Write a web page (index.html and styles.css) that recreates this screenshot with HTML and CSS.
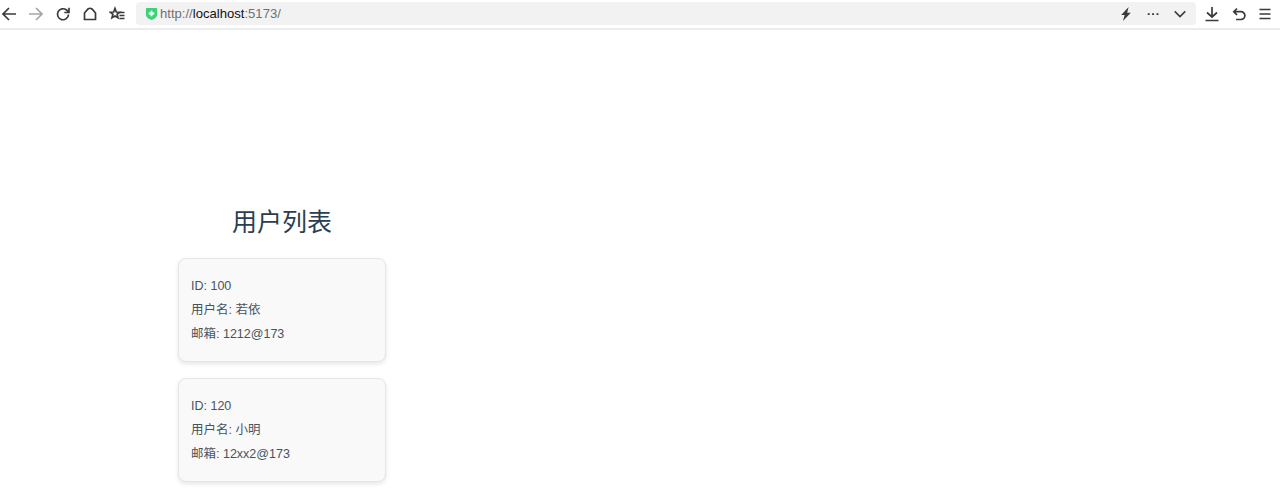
FILE: index.html
```html
<!DOCTYPE html>
<html lang="zh-CN">
  <head>
    <meta charset="UTF-8" />
    <meta name="viewport" content="width=device-width, initial-scale=1.0" />
    <title>用户列表</title>
    <link rel="stylesheet" href="styles.css">
  </head>
  <body>
    <header class="toolbar">
      <div class="nav">
        <svg class="icon" viewBox="0 0 16 16"><path d="M15 8H2M8 2 2 8l6 6"/></svg>
        <svg class="icon muted" viewBox="0 0 16 16"><path d="M1 8h13M8 2l6 6-6 6"/></svg>
        <svg class="icon" viewBox="0 0 16 16"><path d="M13.500 8.500A5.500 5.500 0 1 1 11.500 4L13.500 6M14 1.800v4.700H9.300"/></svg>
        <svg class="icon" viewBox="0 0 16 16"><path d="M2.500 13.500V7L6 3q2-1.500 4 0l3.500 4v6.500z"/></svg>
        <svg class="icon" viewBox="0 0 16 16"><path d="M6 2.500 7.300 6l3.400.2-2.600 2.200.9 3.400L6 10l-3 1.800.9-3.400L1.300 6.200 4.700 6z"/><path d="M10.500 6.500h5M10.500 9.500h5M10.500 12.500h5"/></svg>
      </div>
      <div class="address">
        <svg class="shield" viewBox="0 0 14 14"><path class="shield-bg" d="M1 1.500Q1 .5 2 .5h10q1 0 1 1v6.500q0 3-6 5.500-6-2.500-6-5.500z"/><path class="shield-plus" d="M7 3.500v6M4 6.500h6"/></svg>
        <span class="url">http://<b>localhost</b>:5173/</span>
        <div class="address-tools">
          <svg class="icon small" viewBox="0 0 16 16"><path class="solid" d="M11 0 2.500 9h4L4.500 16l9-9.500H9.300z"/></svg>
          <svg class="icon small" viewBox="0 0 16 16"><path class="solid" d="M2 7h2.200v2.200H2zM7 7h2.200v2.200H7zM12 7h2.200v2.200H12z"/></svg>
          <svg class="icon small" viewBox="0 0 16 16"><path d="M2 5l6 6 6-6"/></svg>
        </div>
      </div>
      <div class="nav end">
        <svg class="icon" viewBox="0 0 16 16"><path d="M8 1v10M3 6.500 8 11l5-4.500M1.500 14.500h13"/></svg>
        <svg class="icon" viewBox="0 0 16 16"><path d="M6 2.500 2.800 5.700 6 8.800M3 5.700h7a3.500 3.500 0 0 1 0 7.800H5"/></svg>
        <svg class="icon" viewBox="0 0 16 16"><path d="M2.500 3.500h11M2.500 8h11M2.500 12.500h11"/></svg>
      </div>
    </header>

    <main class="user-list">
      <h2 class="title">用户列表</h2>
      <div class="card">
        <p>ID: 100</p>
        <p>用户名: 若依</p>
        <p>邮箱: 1212@173</p>
      </div>
      <div class="card">
        <p>ID: 120</p>
        <p>用户名: 小明</p>
        <p>邮箱: 12xx2@173</p>
      </div>
    </main>
  </body>
</html>
```

FILE: styles.css
```css
* {
  box-sizing: border-box;
}

html,
body {
  height: 100%;
}

body {
  margin: 0;
  background: #fff;
  color: #2c3e50;
  font-family: "Liberation Sans", "Noto Sans CJK SC", sans-serif;
  overflow: hidden;
}

.toolbar {
  display: flex;
  align-items: center;
  height: 30px;
  padding: 0 7px 0 1px;
  border-bottom: 2px solid #ececec;
  background: #fff;
}

.nav {
  display: flex;
  align-items: center;
  gap: 11px;
}

.nav.end {
  gap: 10.5px;
  margin-left: 8px;
}

.icon {
  width: 16px;
  height: 16px;
  fill: none;
  stroke: #3a3a3a;
  stroke-width: 1.7;
  flex: none;
}

.icon.muted {
  stroke: #a6a6a6;
}

.icon.small {
  width: 14px;
  height: 14px;
}

.icon .solid {
  fill: #3a3a3a;
  stroke: none;
}

.address {
  flex: 1;
  display: flex;
  align-items: center;
  height: 23px;
  margin: 0 0 1px 11px;
  padding: 0 9px;
  background: #f2f2f2;
  border-radius: 4px;
}

.shield {
  width: 13px;
  height: 14px;
  margin-right: 2px;
  flex: none;
}

.shield-bg {
  fill: #3fd07a;
}

.shield-plus {
  fill: none;
  stroke: #fff;
  stroke-width: 2;
}

.url {
  font-size: 13.1px;
  color: #707070;
}

.url b {
  font-weight: normal;
  color: #111;
}

.address-tools {
  display: flex;
  align-items: center;
  gap: 13px;
  margin-left: auto;
}

.user-list {
  width: 208px;
  margin-left: 178px;
  padding-top: 174px;
}

.title {
  margin: 0 0 18px;
  font-size: 25px;
  font-weight: normal;
  line-height: 36px;
  text-align: center;
}

.card {
  height: 104px;
  margin-bottom: 16px;
  padding: 15px 12px;
  background: #f9f9f9;
  border: 1px solid #e6e6e6;
  border-radius: 8px;
  box-shadow: 0 2px 4px rgba(0, 0, 0, 0.1);
}

.card p {
  margin: 0;
  color: #46535f;
  font-size: 12.5px;
  line-height: 24px;
}
```
